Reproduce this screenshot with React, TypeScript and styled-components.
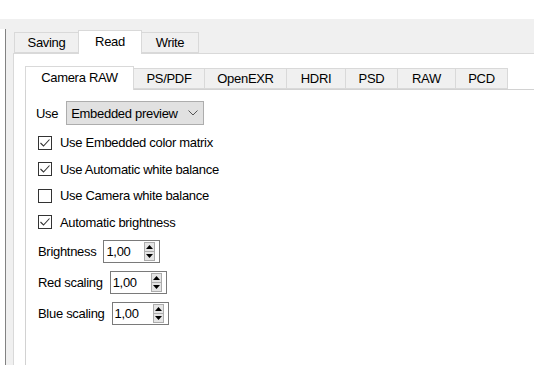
import React from "react";
import styled, { createGlobalStyle } from "styled-components";

const GlobalStyle = createGlobalStyle`
  html, body {
    margin: 0;
    padding: 0;
    background: #ffffff;
  }
  body {
    font-family: "Liberation Sans", Arial, sans-serif;
    font-size: 13px;
    letter-spacing: -0.3px;
    color: #000000;
  }
`;

const Window = styled.div`
  width: 534px;
  height: 365px;
  overflow: hidden;
  display: flex;
  flex-direction: column;
`;

const TopStrip = styled.div`
  height: 19px;
  background: #ffffff;
  flex-shrink: 0;
`;

const Body = styled.div`
  flex: 1;
  display: flex;
  background: #f0f0f0;
  min-height: 0;
`;

const SideList = styled.div`
  width: 5px;
  margin-top: 10px;
  background: #ffffff;
  border-right: 1px solid #828282;
  flex-shrink: 0;
`;

const TabWidget = styled.div<{ $top: number; $left: number }>`
  flex: 1;
  display: flex;
  flex-direction: column;
  margin-top: ${(p) => p.$top}px;
  margin-left: ${(p) => p.$left}px;
  min-width: 0;
`;

const TabBar = styled.div<{ $indent: number }>`
  height: 23px;
  display: flex;
  align-items: flex-end;
  padding-left: ${(p) => p.$indent}px;
  flex-shrink: 0;
  position: relative;
  z-index: 1;
`;

const Tab = styled.div<{ $w: number; $active?: boolean; $first?: boolean }>`
  box-sizing: border-box;
  width: ${(p) => p.$w}px;
  height: ${(p) => (p.$active ? 24 : 21)}px;
  margin-bottom: ${(p) => (p.$active ? -1 : 0)}px;
  margin-left: ${(p) => (p.$first ? 0 : -1)}px;
  padding-bottom: ${(p) => (p.$active ? 2 : 0)}px;
  display: flex;
  align-items: center;
  justify-content: center;
  background: ${(p) => (p.$active ? "#ffffff" : "#f0f0f0")};
  border: 1px solid #d9d9d9;
  border-bottom: ${(p) => (p.$active ? "none" : "1px solid #d9d9d9")};
  position: relative;
  z-index: ${(p) => (p.$active ? 2 : 1)};
  white-space: nowrap;
`;

const Pane = styled.div<{ $pad: string; $line: string }>`
  flex: 1;
  display: flex;
  flex-direction: column;
  background: #ffffff;
  border-top: 1px solid ${(p) => p.$line};
  border-left: 1px solid ${(p) => p.$line};
  padding: ${(p) => p.$pad};
  min-height: 0;
`;

const FieldRow = styled.div`
  display: flex;
  align-items: center;
  gap: 8px;
  height: 24px;
`;

const Combo = styled.div`
  box-sizing: border-box;
  width: 138px;
  height: 24px;
  display: flex;
  align-items: center;
  justify-content: space-between;
  padding: 0 5px 0 4px;
  background: #e1e1e1;
  border: 1px solid #adadad;
`;

const CheckList = styled.div`
  display: flex;
  flex-direction: column;
  gap: 6.67px;
  margin-top: 7.5px;
  margin-left: 2px;
`;

const CheckRow = styled.label`
  display: flex;
  align-items: center;
  gap: 8px;
  height: 20px;
`;

const Box = styled.span`
  box-sizing: border-box;
  width: 14px;
  height: 14px;
  border: 1px solid #333333;
  background: #ffffff;
  display: flex;
  align-items: center;
  justify-content: center;
`;

const SpinList = styled.div`
  display: flex;
  flex-direction: column;
  gap: 8px;
  margin-top: 7.5px;
  margin-left: 2px;
`;

const SpinRow = styled.div`
  display: flex;
  align-items: center;
  gap: 7px;
  height: 23px;
`;

const SpinBox = styled.div`
  box-sizing: border-box;
  width: 57px;
  height: 23px;
  border: 1px solid #7a7a7a;
  background: #ffffff;
  display: flex;
  align-items: center;
  padding: 0 4px 0 2px;
`;

const SpinValue = styled.span`
  flex: 1;
`;

const SpinButtons = styled.div`
  display: flex;
  flex-direction: column;
  width: 11px;
  height: 19px;
`;

const SpinButton = styled.div`
  flex: 1;
  box-sizing: border-box;
  background: #e5e5e5;
  border: 1px solid #acacac;
  display: flex;
  align-items: center;
  justify-content: center;
  & + & {
    border-top: none;
  }
`;

const Check = () => (
  <svg width="12" height="12" viewBox="0 0 12 12">
    <polyline points="1.5,6 4.5,9 10.5,2.5" fill="none" stroke="#333" strokeWidth="1.1" />
  </svg>
);

const Chevron = () => (
  <svg width="10" height="6" viewBox="0 0 10 6">
    <polyline points="0.5,0.5 5,5 9.5,0.5" fill="none" stroke="#555" strokeWidth="1" />
  </svg>
);

const Arrow = ({ up }: { up?: boolean }) => (
  <svg width="7" height="4" viewBox="0 0 7 4">
    <polygon points={up ? "0,4 3.5,0 7,4" : "0,0 3.5,4 7,0"} fill="#000" />
  </svg>
);

const outerTabs = [
  { label: "Saving", w: 65 },
  { label: "Read", w: 64, active: true },
  { label: "Write", w: 58 },
];

const innerTabs = [
  { label: "Camera RAW", w: 109, active: true },
  { label: "PS/PDF", w: 72 },
  { label: "OpenEXR", w: 83 },
  { label: "HDRI", w: 60 },
  { label: "PSD", w: 53 },
  { label: "RAW", w: 59 },
  { label: "PCD", w: 53 },
];

const checks = [
  { label: "Use Embedded color matrix", on: true },
  { label: "Use Automatic white balance", on: true },
  { label: "Use Camera white balance", on: false },
  { label: "Automatic brightness", on: true },
];

const spins = ["Brightness", "Red scaling", "Blue scaling"];

export default function App() {
  return (
    <>
      <GlobalStyle />
      <Window>
        <TopStrip />
        <Body>
          <SideList />
          <TabWidget $top={11} $left={7}>
            <TabBar $indent={1}>
              {outerTabs.map((t, i) => (
                <Tab key={t.label} $w={t.w} $active={t.active} $first={i === 0}>
                  {t.label}
                </Tab>
              ))}
            </TabBar>
            <Pane $pad="12px 0 0 11px" $line="#d9d9d9">
              <TabWidget $top={0} $left={0}>
                <TabBar $indent={0}>
                  {innerTabs.map((t, i) => (
                    <Tab key={t.label} $w={t.w} $active={t.active} $first={i === 0}>
                      {t.label}
                    </Tab>
                  ))}
                </TabBar>
                <Pane $pad="11px 0 0 10px" $line="#d2d2d2">
                  <FieldRow>
                    <span>Use</span>
                    <Combo>
                      <span>Embedded preview</span>
                      <Chevron />
                    </Combo>
                  </FieldRow>
                  <CheckList>
                    {checks.map((c) => (
                      <CheckRow key={c.label}>
                        <Box>{c.on && <Check />}</Box>
                        <span>{c.label}</span>
                      </CheckRow>
                    ))}
                  </CheckList>
                  <SpinList>
                    {spins.map((s) => (
                      <SpinRow key={s}>
                        <span>{s}</span>
                        <SpinBox>
                          <SpinValue>1,00</SpinValue>
                          <SpinButtons>
                            <SpinButton>
                              <Arrow up />
                            </SpinButton>
                            <SpinButton>
                              <Arrow />
                            </SpinButton>
                          </SpinButtons>
                        </SpinBox>
                      </SpinRow>
                    ))}
                  </SpinList>
                </Pane>
              </TabWidget>
            </Pane>
          </TabWidget>
        </Body>
      </Window>
    </>
  );
}
